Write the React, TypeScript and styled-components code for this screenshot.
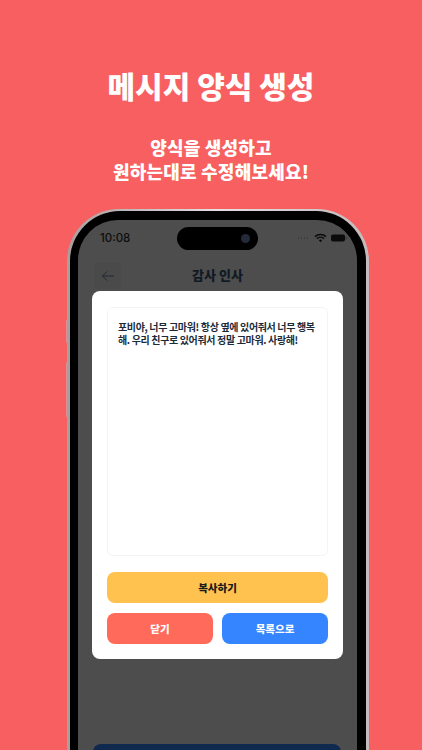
import { ReactElement } from 'react';
import styled, { createGlobalStyle } from 'styled-components';

const GlobalStyle = createGlobalStyle`
  html, body {
    margin: 0;
    padding: 0;
    height: 750px;
    overflow: hidden;
    background: #f85f60;
  }
  * {
    box-sizing: border-box;
  }
`;

const Page = styled.div`
  width: 422px;
  height: 750px;
  overflow: hidden;
  display: flex;
  flex-flow: column;
  align-items: center;
  background: #f85f60;
  font-family: 'Noto Sans CJK KR', 'Noto Sans', sans-serif;
`;

const Title = styled.div`
  margin-top: 65px;
  font-size: 30px;
  line-height: 40px;
  font-weight: 900;
  color: #fff;
`;

const Subtitle = styled.div`
  margin-top: 30px;
  font-size: 18px;
  line-height: 24px;
  letter-spacing: 0.2px;
  font-weight: 900;
  color: #fff;
  text-align: center;
`;

const PhoneFrame = styled.div`
  position: relative;
  flex: none;
  margin-top: 26px;
  margin-left: 14px;
  width: 302px;
  height: 560px;
  padding: 2px 3px 0 3px;
  border-radius: 52px 52px 0 0;
  background: linear-gradient(90deg, #a89d9f, #e6e0e0 50%, #c4babc);
`;

const SideButton = styled.div<{ $top: number; $height: number }>`
  position: absolute;
  left: -1.5px;
  top: ${(p) => p.$top}px;
  width: 1.5px;
  height: ${(p) => p.$height}px;
  border-radius: 1px 0 0 1px;
  background: #d98f96;
`;

const Bezel = styled.div`
  height: 100%;
  padding: 9px 9px 0 8px;
  border-radius: 50px 50px 0 0;
  background: #000;
`;

const Screen = styled.div`
  position: relative;
  height: 100%;
  border-radius: 40px 40px 0 0;
  overflow: hidden;
  background: #4d4d4d;
`;

const StatusBar = styled.div`
  height: 36px;
  padding: 0 10px 0 22px;
  display: flex;
  align-items: center;
  justify-content: space-between;
  font-family: 'Inter', sans-serif;
  font-size: 11.5px;
  font-weight: 500;
  color: #0d0d0d;
`;

const Island = styled.div`
  position: absolute;
  top: 7px;
  left: 99px;
  width: 81px;
  height: 23px;
  border-radius: 12px;
  background: #000;
`;

const Camera = styled.div`
  position: absolute;
  top: 7px;
  right: 8px;
  width: 9px;
  height: 9px;
  border-radius: 50%;
  background: #232a3a;
`;

const StatusIcons = styled.div`
  display: flex;
  align-items: center;
  gap: 4px;
`;

const Dots = styled.div`
  display: flex;
  gap: 1.5px;
  margin-right: 2px;
`;

const Dot = styled.span`
  width: 1.5px;
  height: 1.5px;
  border-radius: 50%;
  background: #3b3b3b;
`;

const Header = styled.div`
  position: relative;
  height: 27px;
  margin-top: 6px;
  padding-bottom: 3px;
  display: flex;
  align-items: center;
  justify-content: center;
  font-size: 13px;
  font-weight: 900;
  color: #111a24;
`;

const BackButton = styled.div`
  position: absolute;
  left: 16px;
  top: 0;
  width: 27px;
  height: 27px;
  border-radius: 4px;
  display: flex;
  align-items: center;
  justify-content: center;
  background: #4a4a4a;
`;

const Modal = styled.div`
  position: absolute;
  top: 71px;
  left: 14px;
  width: 251px;
  height: 368px;
  padding: 16px 15px 15px;
  border-radius: 8px;
  display: flex;
  flex-flow: column;
  background: #fff;
`;

const MessageBox = styled.div`
  flex: none;
  height: 249px;
  padding: 12px 10px;
  border: 1px solid #f4f4f5;
  border-radius: 6px;
  font-size: 10px;
  line-height: 13px;
  letter-spacing: -0.35px;
  font-weight: 700;
  color: #1c2b3a;
`;

const ButtonRow = styled.div`
  flex: none;
  margin-top: 10px;
  display: flex;
  gap: 9px;
`;

const ActionButton = styled.div<{ $bg: string; $color: string }>`
  flex: 1;
  height: 31px;
  border-radius: 8px;
  display: flex;
  align-items: center;
  justify-content: center;
  font-size: 10.5px;
  font-weight: 900;
  background: ${(p) => p.$bg};
  color: ${(p) => p.$color};
`;

const CopyButton = styled(ActionButton)`
  flex: none;
  margin-top: 16px;
`;

const BottomBar = styled.div`
  position: absolute;
  top: 524px;
  left: 15px;
  width: 248px;
  height: 40px;
  border-radius: 8px;
  background: #10294f;
`;

function App(): ReactElement {
  return (
    <>
      <GlobalStyle />
      <Page>
        <Title>메시지 양식 생성</Title>
        <Subtitle>
          양식을 생성하고
          <br />
          원하는대로 수정해보세요!
        </Subtitle>
        <PhoneFrame>
          <SideButton $top={111} $height={23} />
          <SideButton $top={153} $height={55} />
          <Bezel>
            <Screen>
              <StatusBar>
                <span>10:08</span>
                <StatusIcons>
                  <Dots>
                    <Dot />
                    <Dot />
                    <Dot />
                    <Dot />
                  </Dots>
                  <svg width="13" height="10" viewBox="0 0 13 10">
                    <path d="M1 3.6a8 8 0 0 1 11 0M3 5.6a5 5 0 0 1 7 0" fill="none" stroke="#0b0b0b" strokeWidth="1.5" />
                    <path d="M4.8 7.2a2.6 2.6 0 0 1 3.4 0L6.5 9.2z" fill="#0b0b0b" />
                  </svg>
                  <svg width="16" height="8" viewBox="0 0 16 8">
                    <rect x="0" y="0.5" width="14" height="7" rx="2" fill="#0b0b0b" />
                    <rect x="14.6" y="3" width="1" height="2.4" rx="0.5" fill="#333" />
                  </svg>
                </StatusIcons>
              </StatusBar>
              <Island>
                <Camera />
              </Island>
              <Header>
                <BackButton>
                  <svg width="14" height="12" viewBox="0 0 14 12">
                    <path d="M13 6H1.5M6 1.5 1.5 6 6 10.5" fill="none" stroke="#1c2530" strokeWidth="0.9" />
                  </svg>
                </BackButton>
                감사 인사
              </Header>
              <Modal>
                <MessageBox>
                  포비야, 너무 고마워! 항상 옆에 있어줘서 너무 행복해. 우리 친구로 있어줘서 정말 고마워. 사랑해!
                </MessageBox>
                <CopyButton $bg="#ffc24f" $color="#1a1a1a">
                  복사하기
                </CopyButton>
                <ButtonRow>
                  <ActionButton $bg="#ff6a5a" $color="#fff">
                    닫기
                  </ActionButton>
                  <ActionButton $bg="#3485ff" $color="#fff">
                    목록으로
                  </ActionButton>
                </ButtonRow>
              </Modal>
              <BottomBar />
            </Screen>
          </Bezel>
        </PhoneFrame>
      </Page>
    </>
  );
}

export default App;
